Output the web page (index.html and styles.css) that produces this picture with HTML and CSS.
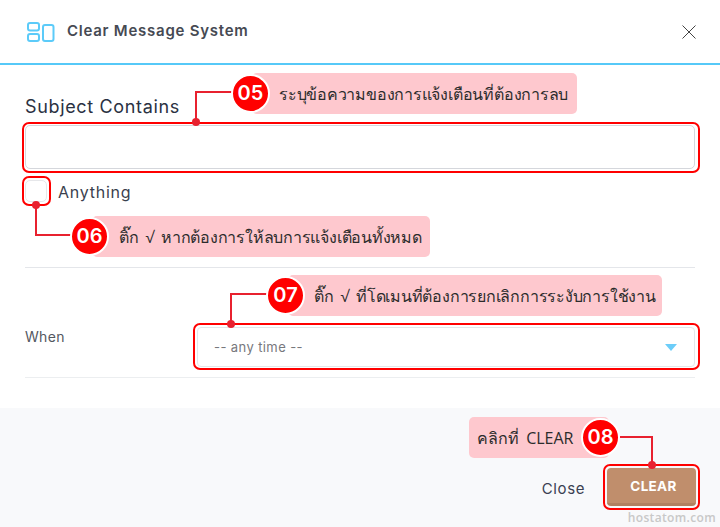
FILE: index.html
```html
<!DOCTYPE html>
<html lang="en">
<head>
  <meta charset="UTF-8" />
  <title>Clear Message System</title>
  <link rel="stylesheet" href="styles.css">
</head>
<body>
  <div class="modal">
    <div class="modal-header">
      <svg class="logo" width="28" height="20" viewBox="0 0 28 20" fill="none" stroke="#5ccbf9" stroke-width="2">
        <rect x="1" y="1" width="11" height="7.5" rx="2" />
        <rect x="1" y="12" width="11" height="7" rx="2" />
        <rect x="16" y="3" width="10.5" height="16" rx="2" />
      </svg>
      <h1>Clear Message System</h1>
      <svg class="close-x" width="14" height="14" viewBox="0 0 14 14" stroke="#444" stroke-width="1" fill="none">
        <path d="M0.5 0.5 L13.5 13.5 M13.5 0.5 L0.5 13.5" />
      </svg>
    </div>

    <div class="modal-body">
      <label class="subject-label">Subject Contains</label>
      <div class="text-input"></div>
      <div class="check-row">
        <span class="checkbox"></span>
        <span class="check-text">Anything</span>
      </div>
      <div class="when-row">
        <span class="when-label">When</span>
        <div class="select-box">
          <span>-- any time --</span>
          <i class="caret"></i>
        </div>
      </div>
    </div>

    <div class="modal-footer">
      <span class="close-link">Close</span>
      <button class="clear-btn">CLEAR</button>
    </div>
  </div>

  <!-- annotation layer -->
  <div class="ring ring-subject"></div>
  <div class="ring ring-check"></div>
  <div class="ring ring-select"></div>
  <div class="ring ring-clear"></div>

  <div class="line line-05"></div>
  <div class="line line-06"></div>
  <div class="line line-07"></div>
  <div class="line line-08"></div>
  <i class="dot dot-05"></i>
  <i class="dot dot-06"></i>
  <i class="dot dot-07"></i>
  <i class="dot dot-08"></i>

  <div class="note note-05"><b class="num">05</b><span>ระบุข้อความของการแจ้งเตือนที่ต้องการลบ</span></div>
  <div class="note note-06"><b class="num">06</b><span>ติ๊ก √ หากต้องการให้ลบการแจ้งเตือนทั้งหมด</span></div>
  <div class="note note-07"><b class="num">07</b><span>ติ๊ก √ ที่โดเมนที่ต้องการยกเลิกการระงับการใช้งาน</span></div>
  <div class="note note-08"><span>คลิกที่ CLEAR</span><b class="num">08</b></div>

  <div class="watermark">hostatom.com</div>
</body>
</html>
```

FILE: styles.css
```css
html, body {
  margin: 0;
  padding: 0;
}

body {
  width: 720px;
  height: 527px;
  position: relative;
  overflow: hidden;
  background: #fff;
  font-family: 'Inter', 'Open Sans', sans-serif;
  color: #3f4254;
}

.modal {
  display: flex;
  flex-direction: column;
  height: 527px;
}

.modal-header {
  height: 63px;
  display: flex;
  align-items: center;
  padding: 0 24px 0 27px;
  border-bottom: 2px solid #56c9f8;
}

.logo {
  margin-right: 12px;
}

.modal-header h1 {
  flex: 1;
  margin: 0 0 2px;
  font-size: 15px;
  font-weight: 600;
  color: #464a53;
  letter-spacing: 0.75px;
}

.close-x {
  margin-top: 1px;
}

.modal-body {
  flex: 1;
  padding: 0 25px;
}

.subject-label {
  display: block;
  margin-top: 31px;
  font-size: 18px;
  line-height: 21px;
  font-weight: 400;
  color: #2a3142;
  letter-spacing: 0.65px;
}

.text-input {
  height: 42px;
  margin-top: 8px;
  border: 1.5px solid #d5d7dc;
  border-radius: 5px;
  background: #fff;
}

.check-row {
  display: flex;
  align-items: center;
  margin-top: 11px;
  padding-bottom: 65px;
  border-bottom: 1px solid #e4e6ea;
}

.checkbox {
  width: 20px;
  height: 20px;
  border: 1px solid #e6e7ea;
  border-radius: 5px;
  margin-right: 11px;
}

.check-text {
  margin-top: 2px;
  font-size: 16px;
  color: #3a3f4e;
  letter-spacing: 0.75px;
}

.when-row {
  display: flex;
  align-items: flex-start;
  padding: 59px 0 10px;
  border-bottom: 1px solid #eceef0;
}

.when-label {
  width: 172px;
  font-size: 14px;
  line-height: 20px;
  color: #54585f;
  letter-spacing: 0.3px;
}

.select-box {
  flex: 1;
  height: 38px;
  display: flex;
  align-items: center;
  justify-content: space-between;
  padding: 0 17px 0 16px;
  border: 1px solid #e5e6e9;
  border-radius: 4px;
  font-size: 13px;
  color: #77787d;
  letter-spacing: 0.4px;
}

.caret {
  width: 0;
  height: 0;
  border-left: 6px solid transparent;
  border-right: 6px solid transparent;
  border-top: 7px solid #6ccdf9;
}

.modal-footer {
  height: 119px;
  box-sizing: border-box;
  background: #f8f9fb;
  display: flex;
  align-items: flex-start;
  justify-content: flex-end;
  padding: 60px 24px 0 0;
}

.close-link {
  margin-top: 11px;
  margin-right: 22px;
  font-size: 15px;
  color: #3a4152;
  letter-spacing: 0.6px;
}

.clear-btn {
  width: 89px;
  height: 38px;
  padding: 0 0 0 4px;
  background: #c08e6c;
  border: none;
  border-bottom: 3px solid #b08060;
  border-radius: 4px;
  color: #fff;
  font-family: inherit;
  font-size: 13.5px;
  font-weight: 700;
  letter-spacing: 0.3px;
}

/* red highlights over the form */
.ring {
  position: absolute;
  box-sizing: border-box;
  border: 2px solid #f00;
  border-radius: 7px;
}
.ring-subject { left: 22px; top: 122px; width: 678px; height: 51px; }
.ring-check { left: 22px; top: 176px; width: 29px; height: 30px; }
.ring-select { left: 193px; top: 323px; width: 507px; height: 47px; }
.ring-clear { left: 603px; top: 464px; width: 97px; height: 46px; }

/* connector lines */
.line {
  position: absolute;
  box-sizing: border-box;
  border: 0 solid #e8212f;
}
.line-05 { left: 195px; top: 91px; width: 40px; height: 30px; border-width: 2px 0 0 2px; }
.line-06 { left: 35px; top: 205px; width: 40px; height: 31px; border-width: 0 0 2px 2px; }
.line-07 { left: 230px; top: 293px; width: 40px; height: 31px; border-width: 2px 0 0 2px; }
.line-08 { left: 620px; top: 436px; width: 33px; height: 29px; border-width: 2px 2px 0 0; }

.dot {
  position: absolute;
  width: 8px;
  height: 8px;
  border-radius: 50%;
  background: #e8212f;
}
.dot-05 { left: 192px; top: 118px; }
.dot-06 { left: 32px; top: 201px; }
.dot-07 { left: 227px; top: 320px; }
.dot-08 { left: 648px; top: 461px; }

/* callouts */
.note {
  position: absolute;
  height: 41px;
  display: flex;
  align-items: center;
  background: #fec8ce;
  border-radius: 5px;
  font-family: 'Open Sans', 'DejaVu Sans', sans-serif;
  font-size: 16px;
  color: #2c2c2c;
  white-space: nowrap;
}
.note-05 { left: 252px; top: 73px; width: 325px; }
.note-06 { left: 92px; top: 216px; width: 338px; }
.note-07 { left: 288px; top: 275px; width: 374px; }
.note-08 { left: 469px; top: 417px; width: 140px; }

.note span {
  position: absolute;
  top: 11px;
  line-height: 20px;
  letter-spacing: -0.22px;
  word-spacing: 3px;
}
.note-05 span { left: 27px; }
.note-06 span { left: 27px; }
.note-07 span { left: 26px; }
.note-08 span { left: 8px; letter-spacing: 0; }

.num {
  position: absolute;
  top: 1px;
  left: -21px;
  width: 35px;
  height: 35px;
  border: 2px solid #fff;
  border-radius: 50%;
  background: #f00;
  color: #fff;
  font-family: 'Inter', sans-serif;
  font-size: 20px;
  font-weight: 600;
  line-height: 35px;
  text-align: center;
}
.note-06 .num, .note-07 .num { left: -22px; }
.note-08 .num { left: 112px; }

.watermark {
  position: absolute;
  right: 4px;
  bottom: 1px;
  font-family: 'Open Sans', sans-serif;
  font-size: 12px;
  font-weight: 600;
  color: #c8c8c8;
  letter-spacing: 0.35px;
}
```
